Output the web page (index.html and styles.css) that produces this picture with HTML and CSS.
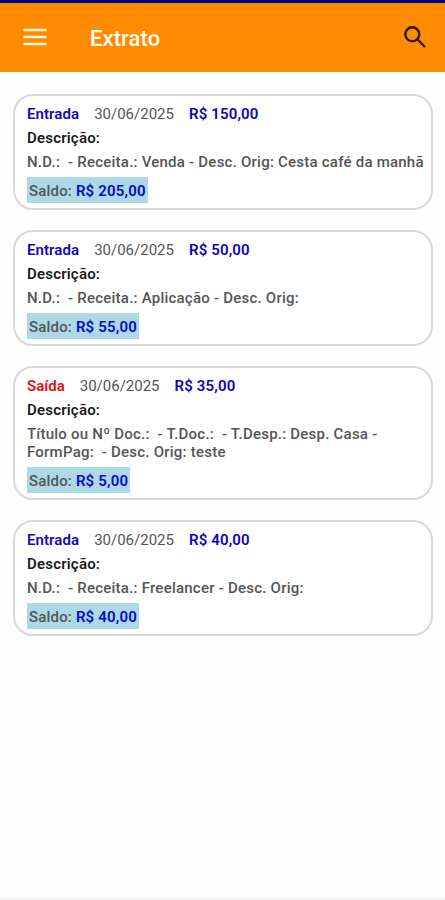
FILE: index.html
```html
<!DOCTYPE html>
<html lang="pt-BR">
<head>
    <meta charset="UTF-8">
    <meta name="viewport" content="width=device-width, initial-scale=1.0">
    <title>Extrato</title>
    <link rel="stylesheet" href="styles.css">
</head>
<body>
    <header>
        <button class="menu" type="button" aria-label="Menu">
            <svg width="24" height="18" viewBox="0 0 24 18"><path d="M0.5 2h23M0.5 9h23M0.5 16h23"/></svg>
        </button>
        <h1>Extrato</h1>
        <button class="search" type="button" aria-label="Buscar">
            <svg width="22" height="22" viewBox="0 0 22 22"><circle cx="8.3" cy="8.3" r="7"/><path d="M13.5 13.5l7.5 7.5"/></svg>
        </button>
    </header>

    <main>
        <article class="card">
            <div class="top">
                <span class="entrada">Entrada</span>
                <time>30/06/2025</time>
                <span class="valor">R$ 150,00</span>
            </div>
            <h2>Descrição:</h2>
            <p>N.D.:&nbsp; - Receita.: Venda - Desc. Orig: Cesta café da manhã</p>
            <div class="saldo">Saldo: <b>R$ 205,00</b></div>
        </article>

        <article class="card">
            <div class="top">
                <span class="entrada">Entrada</span>
                <time>30/06/2025</time>
                <span class="valor">R$ 50,00</span>
            </div>
            <h2>Descrição:</h2>
            <p>N.D.:&nbsp; - Receita.: Aplicação - Desc. Orig:</p>
            <div class="saldo">Saldo: <b>R$ 55,00</b></div>
        </article>

        <article class="card">
            <div class="top">
                <span class="saida">Saída</span>
                <time>30/06/2025</time>
                <span class="valor">R$ 35,00</span>
            </div>
            <h2>Descrição:</h2>
            <p>Título ou Nº Doc.:&nbsp; - T.Doc.:&nbsp; - T.Desp.: Desp. Casa -<br>FormPag:&nbsp; - Desc. Orig: teste</p>
            <div class="saldo">Saldo: <b>R$ 5,00</b></div>
        </article>

        <article class="card">
            <div class="top">
                <span class="entrada">Entrada</span>
                <time>30/06/2025</time>
                <span class="valor">R$ 40,00</span>
            </div>
            <h2>Descrição:</h2>
            <p>N.D.:&nbsp; - Receita.: Freelancer - Desc. Orig:</p>
            <div class="saldo">Saldo: <b>R$ 40,00</b></div>
        </article>
    </main>
    <footer></footer>
</body>
</html>
```
FILE: styles.css
```css
* {
    box-sizing: border-box;
}
body {
    font-family: Roboto, sans-serif;
    font-size: 15px;
    background-color: #fefefe;
    color: #555;
    display: flex;
    flex-direction: column;
    height: 100vh;
    margin: 0;
}
header {
    display: flex;
    align-items: center;
    height: 72px;
    padding: 2px 19px 0 23px;
    background-color: #ff8c00;
    border-top: 3px solid #00008b;
}
button {
    padding: 0 0 3px;
    border: none;
    background: none;
    cursor: pointer;
}
svg {
    display: block;
    fill: none;
}
.menu svg {
    stroke: #fff3df;
    stroke-width: 2.6;
}
.search svg {
    stroke: #2b1800;
    stroke-width: 2.4;
}
h1 {
    flex: 1;
    margin: 0 0 0 43px;
    font-size: 22px;
    font-weight: 500;
    letter-spacing: 0.1px;
    color: #fff8ec;
}
main {
    flex: 1;
    display: flex;
    flex-direction: column;
    gap: 20px;
    padding: 22px 12px 0 13px;
}
.card {
    padding: 5.9px 0 5.2px 12px;
    border: 2px solid #d8d8d8;
    border-radius: 20px;
    background-color: #fff;
}
.top {
    display: flex;
    gap: 15px;
    line-height: 24px;
}
.top span {
    font-weight: 600;
}
.top .entrada {
    letter-spacing: 0.08px;
    color: #1208c0;
}
.top .saida {
    color: #e01010;
}
.top .valor {
    letter-spacing: 0.15px;
    color: #0c04c0;
}
h2 {
    margin: 0;
    font-size: 15px;
    font-weight: 600;
    letter-spacing: 0.2px;
    line-height: 24px;
    color: #1c1c1c;
}
p {
    margin: 3px 0 5px;
    font-weight: 500;
    letter-spacing: 0.23px;
    line-height: 18.8px;
    white-space: nowrap;
}
.saldo {
    width: fit-content;
    padding: 2px 2px 0 2px;
    line-height: 24px;
    font-weight: 500;
    letter-spacing: 0.18px;
    background-color: #add8e6;
}
.saldo b {
    font-weight: 600;
    color: #0808c8;
}
footer {
    height: 3px;
    background-color: #f6f6f6;
}
```
